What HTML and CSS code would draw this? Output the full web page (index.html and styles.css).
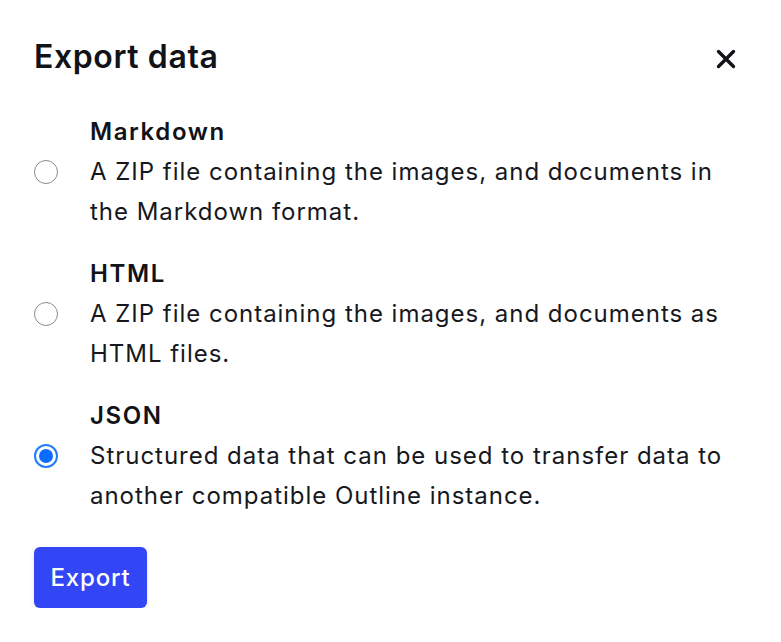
FILE: index.html
```html
<!DOCTYPE html>
<html>
<head>
<meta charset="utf-8">
<link rel="stylesheet" href="styles.css">
</head>
<body>
<div class="dialog">
  <header class="header">
    <h1 class="title">Export data</h1>
    <button class="close" aria-label="Close">
      <svg width="24" height="24" viewBox="0 0 24 24"><path d="M4.5 4.5L19.5 19.5M19.5 4.5L4.5 19.5" stroke="#111319" stroke-width="3.4" stroke-linecap="round"/></svg>
    </button>
  </header>
  <div class="options">
    <label class="option">
      <span class="radio"></span>
      <span class="name">Markdown</span>
      <span class="desc">A ZIP file containing the images, and documents in the Markdown format.</span>
    </label>
    <label class="option">
      <span class="radio"></span>
      <span class="name">HTML</span>
      <span class="desc">A ZIP file containing the images, and documents as HTML files.</span>
    </label>
    <label class="option">
      <span class="radio checked"></span>
      <span class="name">JSON</span>
      <span class="desc">Structured data that can be used to transfer data to another compatible Outline instance.</span>
    </label>
  </div>
  <button class="export">Export</button>
</div>
</body>
</html>
```
FILE: styles.css
```css
html, body {
  margin: 0;
  background: #fff;
}
body {
  font-family: Inter, "Noto Sans", sans-serif;
  color: #111319;
}
.dialog {
  padding: 32px 34px 0 34px;
  width: 781px;
  box-sizing: border-box;
}
.header {
  display: flex;
  align-items: center;
  justify-content: space-between;
}
.title {
  margin: 0;
  font-size: 32px;
  font-weight: 600;
  line-height: 50px;
  letter-spacing: 0.6px;
}
.close {
  border: 0;
  background: none;
  padding: 0;
  margin-right: 3px;
  margin-top: 4px;
  width: 36px;
  height: 36px;
  display: flex;
  align-items: center;
  justify-content: center;
}
.options {
  margin-top: 30px;
  display: flex;
  flex-direction: column;
  gap: 22px;
}
.option {
  display: grid;
  grid-template-columns: 24px 1fr;
  column-gap: 32px;
  align-items: center;
}
.name {
  grid-column: 2;
  grid-row: 1;
  font-size: 24px;
  font-weight: 600;
  line-height: 40px;
  letter-spacing: 1.6px;
}
.desc {
  grid-column: 2;
  grid-row: 2 / span 2;
  align-self: start;
  font-size: 24px;
  line-height: 40px;
  letter-spacing: 0.98px;
  color: #16181d;
}
.radio {
  grid-column: 1;
  grid-row: 2;
  align-self: start;
  margin-top: 8px;
  width: 24px;
  height: 24px;
  box-sizing: border-box;
  border: 1.5px solid #8a8a8e;
  border-radius: 50%;
}
.radio.checked {
  border: 2px solid #1f7cff;
  background: #fff;
  position: relative;
}
.radio.checked::after {
  content: "";
  position: absolute;
  left: 3px;
  top: 3px;
  width: 14px;
  height: 14px;
  border-radius: 50%;
  background: #0a6cff;
}
.export {
  margin-top: 31px;
  background: #3346f5;
  color: #fff;
  border: 0;
  border-radius: 6px;
  font-family: Inter, sans-serif;
  font-size: 24px;
  font-weight: 500;
  letter-spacing: 0.8px;
  width: 113px;
  height: 61px;
  padding: 0;
  box-shadow: 0 2px 4px rgba(0,0,0,0.12);
}
```
